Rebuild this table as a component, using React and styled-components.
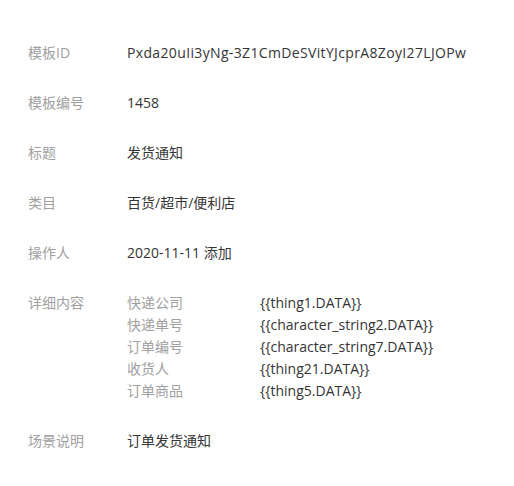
import React from 'react';
import styled, { createGlobalStyle } from 'styled-components';

const GlobalStyle = createGlobalStyle`
  body {
    margin: 0;
    background: #fff;
    font-family: 'Open Sans', 'Noto Sans CJK SC', sans-serif;
  }
`;

const Panel = styled.div`
  padding: 42px 0 0 28px;
  display: flex;
  flex-direction: column;
  gap: 28px;
  font-size: 14px;
  line-height: 22px;
`;

const Row = styled.div`
  display: flex;
`;

const Label = styled.div`
  width: 99px;
  flex-shrink: 0;
  color: #a0a0a0;
`;

const Value = styled.div`
  color: #353535;
  letter-spacing: ${(p) => (p.wide ? '0.35px' : '0')};
`;

const DetailGrid = styled.div`
  display: grid;
  grid-template-columns: 133px auto;
`;

const SubLabel = styled.div`
  color: #a0a0a0;
`;

const SubValue = styled.div`
  color: #353535;
`;

const rows = [
  ['模板ID', 'Pxda20uIi3yNg-3Z1CmDeSVitYJcprA8ZoyI27LJOPw'],
  ['模板编号', '1458'],
  ['标题', '发货通知'],
  ['类目', '百货/超市/便利店'],
  ['操作人', '2020-11-11 添加'],
];

const details = [
  ['快递公司', '{{thing1.DATA}}'],
  ['快递单号', '{{character_string2.DATA}}'],
  ['订单编号', '{{character_string7.DATA}}'],
  ['收货人', '{{thing21.DATA}}'],
  ['订单商品', '{{thing5.DATA}}'],
];

export default function App() {
  return (
    <>
      <GlobalStyle />
      <Panel>
        {rows.map(([k, v]) => (
          <Row key={k}>
            <Label>{k}</Label>
            <Value wide={k === '模板ID'}>{v}</Value>
          </Row>
        ))}
        <Row>
          <Label>详细内容</Label>
          <DetailGrid>
            {details.map(([k, v]) => (
              <React.Fragment key={k}>
                <SubLabel>{k}</SubLabel>
                <SubValue>{v}</SubValue>
              </React.Fragment>
            ))}
          </DetailGrid>
        </Row>
        <Row>
          <Label>场景说明</Label>
          <Value>订单发货通知</Value>
        </Row>
      </Panel>
    </>
  );
}
